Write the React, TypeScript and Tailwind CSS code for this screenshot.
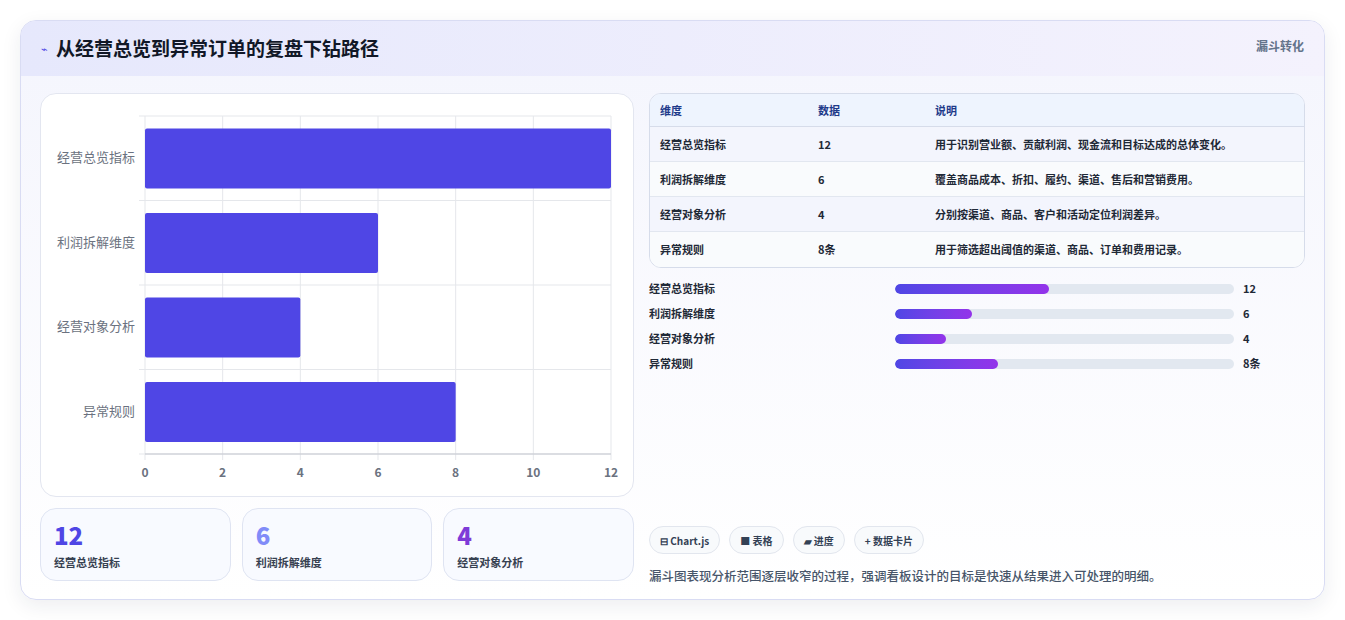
import React from "react";

const rows = [
  { name: "经营总览指标", value: 12, label: "12", desc: "用于识别营业额、贡献利润、现金流和目标达成的总体变化。" },
  { name: "利润拆解维度", value: 6, label: "6", desc: "覆盖商品成本、折扣、履约、渠道、售后和营销费用。" },
  { name: "经营对象分析", value: 4, label: "4", desc: "分别按渠道、商品、客户和活动定位利润差异。" },
  { name: "异常规则", value: 8, label: "8条", desc: "用于筛选超出阈值的渠道、商品、订单和费用记录。" },
];

const font = { fontFamily: '"Noto Sans CJK SC", "Noto Sans", sans-serif' };

function BarChart() {
  const W = 594, H = 404;
  const x0 = 104, x1 = 570, y0 = 22, y1 = 360;
  const band = (y1 - y0) / 4;
  const sx = (v: number) => x0 + ((x1 - x0) * v) / 12;
  return (
    <svg width={W} height={H} className="block">
      {[0, 2, 4, 6, 8, 10, 12].map((t) => (
        <g key={t}>
          <line x1={sx(t)} x2={sx(t)} y1={y0} y2={y1 + 6} stroke="#e5e7eb" />
          <text x={sx(t)} y={y1 + 23} textAnchor="middle" fontSize="12" fontWeight="600" fill="#6b7280">{t}</text>
        </g>
      ))}
      {[0, 1, 2, 3, 4].map((i) => (
        <line key={i} x1={x0 - 6} x2={x1} y1={y0 + band * i} y2={y0 + band * i} stroke="#e5e7eb" />
      ))}
      <line x1={x0} x2={x1} y1={y1} y2={y1} stroke="#c4c7cf" />
      {rows.map((r, i) => (
        <g key={r.name}>
          <rect x={x0} y={y0 + band * i + 12.5} width={sx(r.value) - x0} height={60} rx="2" fill="#4f46e5" />
          <text x={x0 - 10} y={y0 + band * i + band / 2 + 4} textAnchor="end" fontSize="13" fill="#6b7280">{r.name}</text>
        </g>
      ))}
    </svg>
  );
}

export default function App() {
  return (
    <div className="min-h-screen bg-white p-5" style={font}>
      <div className="h-[580px] rounded-2xl border border-[#d9dcf3] bg-gradient-to-b from-[#f4f5fd] to-white shadow-[0_6px_20px_rgba(30,41,59,0.08)] overflow-hidden flex flex-col">
        <div className="h-[55px] flex items-start justify-between px-5 bg-gradient-to-r from-[#e6e8fc] to-[#f4f2fd]">
          <div className="flex items-center gap-2 h-full">
            <span className="text-[#4f46e5] text-[11px]">⌁</span>
            <h1 className="text-[19px] font-bold text-[#111827]">从经营总览到异常订单的复盘下钻路径</h1>
          </div>
          <span className="mt-[16px] text-[12px] font-bold text-[#64748b]">漏斗转化</span>
        </div>
        <div className="flex gap-[15px] px-[19px] pt-[17px]">
          <div className="w-[594px] flex flex-col gap-[11px]">
            <div className="h-[404px] rounded-2xl border border-[#e3e6f0] bg-white overflow-hidden">
              <BarChart />
            </div>
            <div className="grid grid-cols-3 gap-[11px]">
              {[
                ["12", "经营总览指标", "text-[#4f46e5]"],
                ["6", "利润拆解维度", "text-[#818cf8]"],
                ["4", "经营对象分析", "text-[#7e3bd8]"],
              ].map(([v, l, c]) => (
                <div key={l} className="h-[73px] rounded-2xl border border-[#dfe4f2] bg-[#f8faff] px-[13px] pt-[11px]">
                  <div className={`text-[24px] font-extrabold leading-[30px] ${c}`}>{v}</div>
                  <div className="text-[11px] font-semibold text-[#374151] mt-[4px]">{l}</div>
                </div>
              ))}
            </div>
          </div>
          <div className="flex-1 flex flex-col">
            <div className="rounded-xl border border-[#d6dcea] overflow-hidden bg-white">
              <div className="flex h-[33px] items-center bg-[#eef4fe] border-b border-[#d6dcea] text-[11px] font-bold text-[#1e3a8a]">
                <div className="w-[168px] pl-[10px]">维度</div>
                <div className="w-[117px]">数据</div>
                <div>说明</div>
              </div>
              {rows.map((r, i) => (
                <div key={r.name} className={`flex h-[35px] items-center text-[11px] font-semibold text-[#1f2937] ${i < 3 ? "border-b border-[#e2e7f0]" : ""} ${i % 2 === 0 ? "bg-[#f3f5fd]" : "bg-[#f9fbfd]"}`}>
                  <div className="w-[168px] pl-[10px]">{r.name}</div>
                  <div className="w-[117px]">{r.label}</div>
                  <div>{r.desc}</div>
                </div>
              ))}
            </div>
            <div className="mt-[12px] flex flex-col gap-[8px]">
              {rows.map((r) => (
                <div key={r.name} className="flex items-center h-[17px] text-[11px] font-bold text-[#1f2937]">
                  <div className="w-[246px]">{r.name}</div>
                  <div className="w-[339px] h-[10px] rounded-full bg-[#e2e8f0] overflow-hidden">
                    <div className="h-full rounded-full bg-gradient-to-r from-[#4f46e5] to-[#9333ea]" style={{ width: `${(r.value / 12) * 45.5}%` }} />
                  </div>
                  <div className="ml-[9px]">{r.label}</div>
                </div>
              ))}
            </div>
            <div className="mt-auto flex gap-[9px] pt-0" style={{ marginTop: 154 }}>
              {["⊟ Chart.js", "■ 表格", "▰ 进度", "+ 数据卡片"].map((c) => (
                <span key={c} className="h-[28px] flex items-center rounded-full border border-[#e2e6ee] bg-[#f8fafc] px-[10px] text-[10px] font-bold text-[#334155]">{c}</span>
              ))}
            </div>
            <p className="mt-[13px] text-[12.5px] font-medium text-[#475569]">漏斗图表现分析范围逐层收窄的过程，强调看板设计的目标是快速从结果进入可处理的明细。</p>
          </div>
        </div>
      </div>
    </div>
  );
}
